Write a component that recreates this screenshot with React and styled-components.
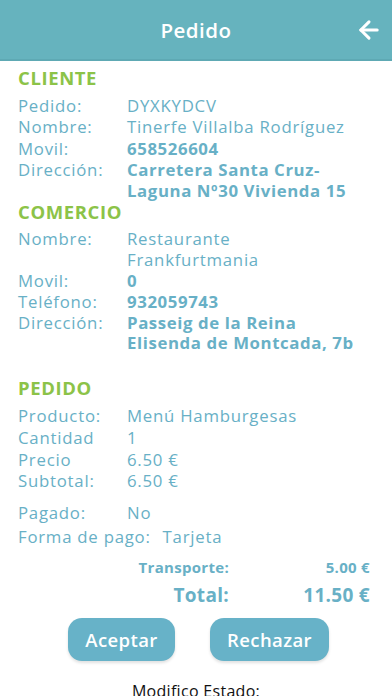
import React from "react";
import styled, { createGlobalStyle } from "styled-components";
import { ArrowLeft } from "lucide-react";

const Global = createGlobalStyle`
  html, body { margin: 0; padding: 0; background: #ffffff; }
  body { font-family: "Open Sans", "Noto Sans", sans-serif; }
  * { box-sizing: border-box; }
`;

const Page = styled.div`
  width: 392px;
  height: 696px;
  overflow: hidden;
  background: #fff;
`;

const Header = styled.header`
  height: 61px;
  background: #66b3be;
  border-bottom: 2px solid #5ea9b4;
  display: flex;
  align-items: center;
  justify-content: center;
  position: relative;
`;

const Title = styled.h1`
  margin: 0;
  color: #fff;
  font-size: 20.5px;
  font-weight: 600;
  letter-spacing: 0.5px;
`;

const BackButton = styled.button`
  position: absolute;
  right: 9px;
  top: 16px;
  background: none;
  border: 0;
  padding: 0;
  color: #fff;
  display: flex;
`;

const Content = styled.main`
  padding: 6px 18px 0 18px;
  color: #68b0c6;
  letter-spacing: 0.75px;
`;

const SectionTitle = styled.h2`
  margin: ${(p) => p.$top || 0}px 0 6px 0;
  color: #8cc348;
  font-size: 18.5px;
  font-weight: 700;
  line-height: 22px;
  letter-spacing: 0.6px;
`;

const Rows = styled.div`
  display: grid;
  grid-template-columns: 109px 1fr;
  line-height: ${(p) => p.$lh || 21.3}px;
  font-size: 16.8px;
  margin-top: ${(p) => p.$top || 0}px;
  white-space: nowrap;
`;

const Label = styled.span`
  font-weight: 400;
`;

const Value = styled.span`
  font-weight: ${(p) => (p.$bold ? 700 : 400)};
  letter-spacing: ${(p) => (p.$bold ? 0.6 : 0.75)}px;
`;

const Inline = styled.div`
  font-size: 16.8px;
  line-height: 22px;
  margin-top: 2px;
  display: flex;
  gap: 12px;
`;

const Totals = styled.div`
  display: grid;
  grid-template-columns: 1fr 141px;
  margin-top: 6px;
  padding-right: 4px;
  letter-spacing: 0.3px;
`;

const TotLabel = styled.span`
  text-align: right;
  font-weight: 700;
  font-size: ${(p) => p.$size}px;
  line-height: ${(p) => p.$lh}px;
`;

const TotValue = styled.span`
  text-align: right;
  font-weight: 700;
  font-size: ${(p) => p.$size}px;
  line-height: ${(p) => p.$lh}px;
`;

const Buttons = styled.div`
  display: flex;
  justify-content: center;
  gap: 35px;
  margin-top: 8px;
  padding-left: 5px;
`;

const Btn = styled.button`
  width: ${(p) => p.$w}px;
  height: 43px;
  border: 0;
  border-radius: 14px;
  background: #67b2c8;
  color: #fff;
  font-family: inherit;
  font-size: 18.5px;
  font-weight: 600;
  letter-spacing: 0.4px;
  box-shadow: 0 2px 3px rgba(0, 0, 0, 0.12);
`;

const Status = styled.div`
  text-align: center;
  color: #111;
  font-size: 16px;
  letter-spacing: 0.3px;
  margin-top: 19px;
`;

export default function App() {
  return (
    <Page>
      <Global />
      <Header>
        <Title>Pedido</Title>
        <BackButton aria-label="Volver">
          <ArrowLeft size={28} strokeWidth={2.6} />
        </BackButton>
      </Header>
      <Content>
        <SectionTitle>CLIENTE</SectionTitle>
        <Rows>
          <Label>Pedido:</Label>
          <Value>DYXKYDCV</Value>
          <Label>Nombre:</Label>
          <Value>Tinerfe Villalba Rodríguez</Value>
          <Label>Movil:</Label>
          <Value $bold>658526604</Value>
          <Label>Dirección:</Label>
          <Value $bold>Carretera Santa Cruz-<br />Laguna Nº30 Vivienda 15</Value>
        </Rows>
        <SectionTitle>COMERCIO</SectionTitle>
        <Rows $lh={20.8}>
          <Label>Nombre:</Label>
          <Value>Restaurante<br />Frankfurtmania</Value>
          <Label>Movil:</Label>
          <Value $bold>0</Value>
          <Label>Teléfono:</Label>
          <Value $bold>932059743</Value>
          <Label>Dirección:</Label>
          <Value $bold>Passeig de la Reina<br />Elisenda de Montcada, 7b</Value>
        </Rows>
        <SectionTitle $top={23}>PEDIDO</SectionTitle>
        <Rows $lh={21.7} $top={3}>
          <Label>Producto:</Label>
          <Value>Menú Hamburgesas</Value>
          <Label>Cantidad</Label>
          <Value>1</Value>
          <Label>Precio</Label>
          <Value>6.50 €</Value>
          <Label>Subtotal:</Label>
          <Value>6.50 €</Value>
        </Rows>
        <Rows $top={10} $lh={22}>
          <Label>Pagado:</Label>
          <Value>No</Value>
        </Rows>
        <Inline>
          <span>Forma de pago:</span>
          <span>Tarjeta</span>
        </Inline>
        <Totals>
          <TotLabel $size={15} $lh={26}>Transporte:</TotLabel>
          <TotValue $size={15} $lh={26}>5.00 €</TotValue>
          <TotLabel $size={19} $lh={30}>Total:</TotLabel>
          <TotValue $size={19} $lh={30}>11.50 €</TotValue>
        </Totals>
        <Buttons>
          <Btn $w={107}>Aceptar</Btn>
          <Btn $w={119}>Rechazar</Btn>
        </Buttons>
        <Status>Modifico Estado:</Status>
      </Content>
    </Page>
  );
}
